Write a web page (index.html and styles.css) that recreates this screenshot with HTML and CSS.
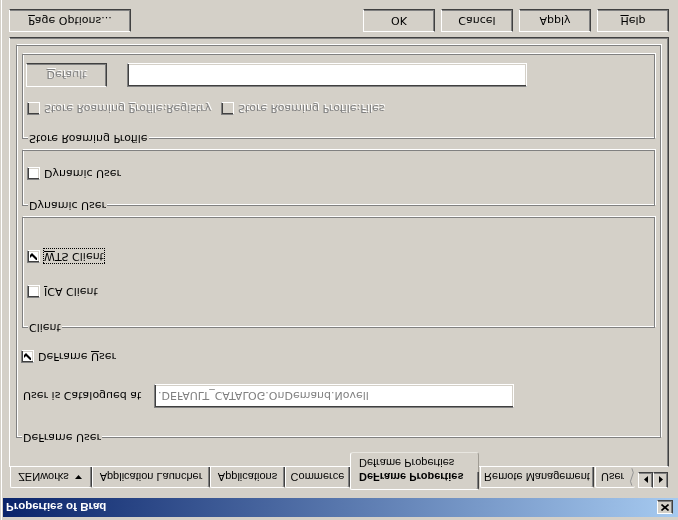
FILE: index.html
```html
<!DOCTYPE html>
<html lang="en">
<head>
    <meta charset="utf-8">
    <title>Properties of Brad</title>
    <link rel="stylesheet" href="styles.css">
</head>
<body>
    <div class="window">
        <div class="titlebar">
            <span class="title">Properties of Brad</span>
            <span class="close">
                <svg width="8" height="7" viewBox="0 0 8 7"><path d="M0.5 0.5 L7.5 6.5 M7.5 0.5 L0.5 6.5" stroke="#000" stroke-width="1.6"/></svg>
            </span>
        </div>

        <div class="tabs">
            <div class="tab zen">ZENworks <svg class="tri" width="7" height="4" viewBox="0 0 7 4"><polygon points="0,0 7,0 3.5,4" fill="#000"/></svg></div>
            <div class="tab launcher">Application Launcher</div>
            <div class="tab apps">Applications</div>
            <div class="tab commerce">Commerce</div>
            <div class="tab active">DeFrame Properties</div>
            <div class="tab remote">Remote Management</div>
            <div class="tab user">User <svg class="cut" width="6" height="18" viewBox="0 0 6 18"><path d="M3 0 Q0 4.5 3 9 Q6 13.5 3 18" stroke="#909090" fill="none"/></svg></div>
            <div class="scroll">
                <span class="arrow"><svg width="4" height="7" viewBox="0 0 4 7"><polygon points="4,0 4,7 0,3.5" fill="#000"/></svg></span>
                <span class="arrow"><svg width="4" height="7" viewBox="0 0 4 7"><polygon points="0,0 0,7 4,3.5" fill="#000"/></svg></span>
            </div>
        </div>
        <div class="subtab">Deframe Properties</div>

        <div class="panel">
            <div class="group deframe">
                <div class="legend">DeFrame User</div>

                <div class="row catalog">
                    <span class="field-label">User is Catalogued at</span>
                    <div class="field catalog-field">.DEFAULT_CATALOG.OnDemand.Novell</div>
                </div>

                <div class="check deframe-check"><span class="box"><svg width="7" height="7" viewBox="0 0 7 7"><polygon points="0,2 2,4 7,-1 7,2 2,7 0,5" fill="#000"/></svg></span><span class="label">DeFrame <u>U</u>ser</span></div>

                <div class="group client">
                    <div class="legend">Client</div>
                    <div class="check ica"><span class="box"></span><span class="label"><u>I</u>CA Client</span></div>
                    <div class="check wts"><span class="box"><svg width="7" height="7" viewBox="0 0 7 7"><polygon points="0,2 2,4 7,-1 7,2 2,7 0,5" fill="#000"/></svg></span><span class="label focus"><u>W</u>TS Client</span></div>
                </div>

                <div class="group dynamic">
                    <div class="legend">Dynamic User</div>
                    <div class="check dyn"><span class="box"></span><span class="label">Dynamic User</span></div>
                </div>

                <div class="group roaming">
                    <div class="legend">Store Roaming Profile</div>
                    <div class="row store">
                        <div class="check disabled registry"><span class="box"></span><span class="label">Store Roaming <u>P</u>rofile:Registry</span></div>
                        <div class="check disabled"><span class="box"></span><span class="label">Store Roaming Profile:Files</span></div>
                    </div>
                    <div class="row defaults">
                        <div class="button disabled default-btn"><u>D</u>efault</div>
                        <div class="field profile-field"></div>
                    </div>
                </div>
            </div>
        </div>

        <div class="buttons">
            <div class="button page-options"><u>P</u>age Options...</div>
            <div class="button ok">OK</div>
            <div class="button">Cancel</div>
            <div class="button">Apply</div>
            <div class="button"><u>H</u>elp</div>
        </div>
    </div>
</body>
</html>
```

FILE: styles.css
```css
* {
    box-sizing: border-box;
}

html, body {
    margin: 0;
    padding: 0;
    overflow: hidden;
    background: #d4d0c8;
}

body {
    font-family: 'DejaVu Sans', Verdana, sans-serif;
    font-size: 11px;
    color: #000;
}

/* the whole dialog is shown upside down */
.window {
    position: relative;
    width: 678px;
    height: 520px;
    padding-top: 3px;
    background: #d4d0c8;
    box-shadow: inset 1px 0 0 #d4d0c8, inset 2px 0 0 #fff;
    transform: scaleY(-1);
}

.titlebar {
    display: flex;
    align-items: center;
    justify-content: space-between;
    height: 19px;
    margin-left: 3px;
    padding: 0 5px 0 3px;
    background: linear-gradient(to right, #0a246a, #a6caf0);
    color: #fff;
    font-family: 'Liberation Sans', Arial, sans-serif;
    font-size: 11.5px;
    font-weight: bold;
}

.close {
    display: flex;
    align-items: center;
    justify-content: center;
    width: 16px;
    height: 14px;
    background: #d4d0c8;
    border: 1px solid;
    border-color: #fff #404040 #404040 #fff;
    box-shadow: inset -1px -1px 0 #808080;
}

/* tabs */
.tabs {
    position: relative;
    z-index: 1;
    display: flex;
    align-items: flex-start;
    height: 24px;
    margin: 8px 0 -1px 10px;
    font-family: 'Liberation Sans', Arial, sans-serif;
}

.tab {
    display: flex;
    align-items: center;
    justify-content: center;
    height: 21px;
    margin-top: 2px;
    border-top: 1px solid #fff;
    border-left: 1px solid #fff;
    border-right: 1px solid #404040;
    border-radius: 2px 2px 0 0;
    box-shadow: inset -1px 0 0 #808080;
    white-space: nowrap;
}

.tab .tri {
    margin-left: 6px;
}

.zen { width: 82px; padding-right: 2px; }
.launcher { width: 118px; }
.apps { width: 75px; }
.commerce { width: 65px; }
.remote { width: 114px; margin-left: 1px; }

.tab.active {
    width: 129px;
    height: 24px;
    margin-top: 0;
    background: #d4d0c8;
    font-weight: bold;
    justify-content: flex-start;
    padding-left: 8px;
}

.tab.user {
    width: 40px;
    margin-left: 1px;
    border-right: none;
    box-shadow: none;
    justify-content: flex-start;
    padding-left: 5px;
}

.tab .cut {
    margin-left: 5px;
}

.scroll {
    display: flex;
    margin: 2px 0 0 3px;
}

.arrow {
    display: flex;
    align-items: center;
    justify-content: center;
    width: 15px;
    height: 16px;
    border: 1px solid;
    border-color: #fff #404040 #404040 #fff;
    box-shadow: inset -1px -1px 0 #808080;
}

/* caption shown under the open tab */
.subtab {
    position: absolute;
    left: 350px;
    top: 48px;
    z-index: 2;
    width: 129px;
    height: 20px;
    padding: 3px 0 0 8px;
    background: #d4d0c8;
    border-left: 1px solid #fff;
    border-right: 1px solid #a09c94;
    border-bottom: 1px solid #e8e6e0;
    border-radius: 0 0 3px 3px;
    font-family: 'Liberation Sans', Arial, sans-serif;
}

/* page */
.panel {
    width: 660px;
    height: 430px;
    margin-left: 9px;
    padding: 28px 0 0 6px;
    border: 1px solid;
    border-color: #fff #404040 #404040 #fff;
    box-shadow: inset -1px -1px 0 #808080;
}

.group {
    display: flex;
    flex-direction: column;
    align-items: flex-start;
    border: 1px solid #808080;
    box-shadow: 1px 1px 0 #fff, inset 1px 1px 0 #fff;
}

.legend {
    margin: -7px 0 0 5px;
    padding: 0 1px;
    line-height: 13px;
    background: #d4d0c8;
}

.deframe {
    width: 645px;
    height: 393px;
}

.client {
    width: 633px;
    height: 111px;
    margin: 22px 0 0 5px;
}

.dynamic {
    width: 633px;
    height: 56px;
    margin: 11px 0 0 5px;
}

.roaming {
    width: 633px;
    height: 85px;
    margin: 11px 0 0 5px;
}

.row {
    display: flex;
    align-items: center;
}

.catalog {
    margin: 23px 0 0 6px;
}

.field-label {
    width: 131px;
}

.field {
    height: 24px;
    padding: 0 3px;
    display: flex;
    align-items: center;
    background: #fff;
    border: 1px solid;
    border-color: #808080 #fff #fff #808080;
    box-shadow: inset 1px 1px 0 #404040, inset -1px -1px 0 #d4d0c8;
}

.catalog-field {
    width: 360px;
    color: #808080;
}

.profile-field {
    width: 400px;
    margin-left: 20px;
}

/* checkboxes */
.check {
    display: flex;
    align-items: center;
    height: 13px;
    margin-left: 4px;
}

.box {
    display: flex;
    align-items: center;
    justify-content: center;
    width: 13px;
    height: 13px;
    background: #fff;
    border: 1px solid;
    border-color: #808080 #fff #fff #808080;
    box-shadow: inset 1px 1px 0 #404040, inset -1px -1px 0 #d4d0c8;
}

.check .label {
    margin-left: 4px;
    white-space: nowrap;
}

.deframe-check { margin-top: 21px; }
.ica { margin-top: 23px; }
.wts { margin-top: 22px; }
.dyn { margin-top: 19px; }

.wts .label {
    margin-left: 3px;
    padding: 1px 1px;
    line-height: 14px;
    outline: 1px dotted #000;
    outline-offset: -1px;
}

.store {
    margin-top: 17px;
}

.store .check {
    margin-left: 0;
}

.store .registry {
    width: 194px;
    margin-left: 4px;
}

.check.disabled .box {
    background: #d4d0c8;
}

.disabled .label,
.button.disabled {
    color: #808080;
    text-shadow: 1px 1px 0 #fff;
}

.defaults {
    margin: 15px 0 0 3px;
}

/* push buttons */
.button {
    display: flex;
    align-items: center;
    justify-content: center;
    height: 23px;
    width: 72px;
    border: 1px solid;
    border-color: #fff #404040 #404040 #fff;
    box-shadow: inset -1px -1px 0 #808080;
}

.default-btn {
    width: 81px;
    height: 24px;
}

.buttons {
    display: flex;
    gap: 6px;
    width: 660px;
    margin: 5px 0 0 9px;
}

.page-options {
    width: 122px;
}

.ok {
    margin-left: auto;
}
```
